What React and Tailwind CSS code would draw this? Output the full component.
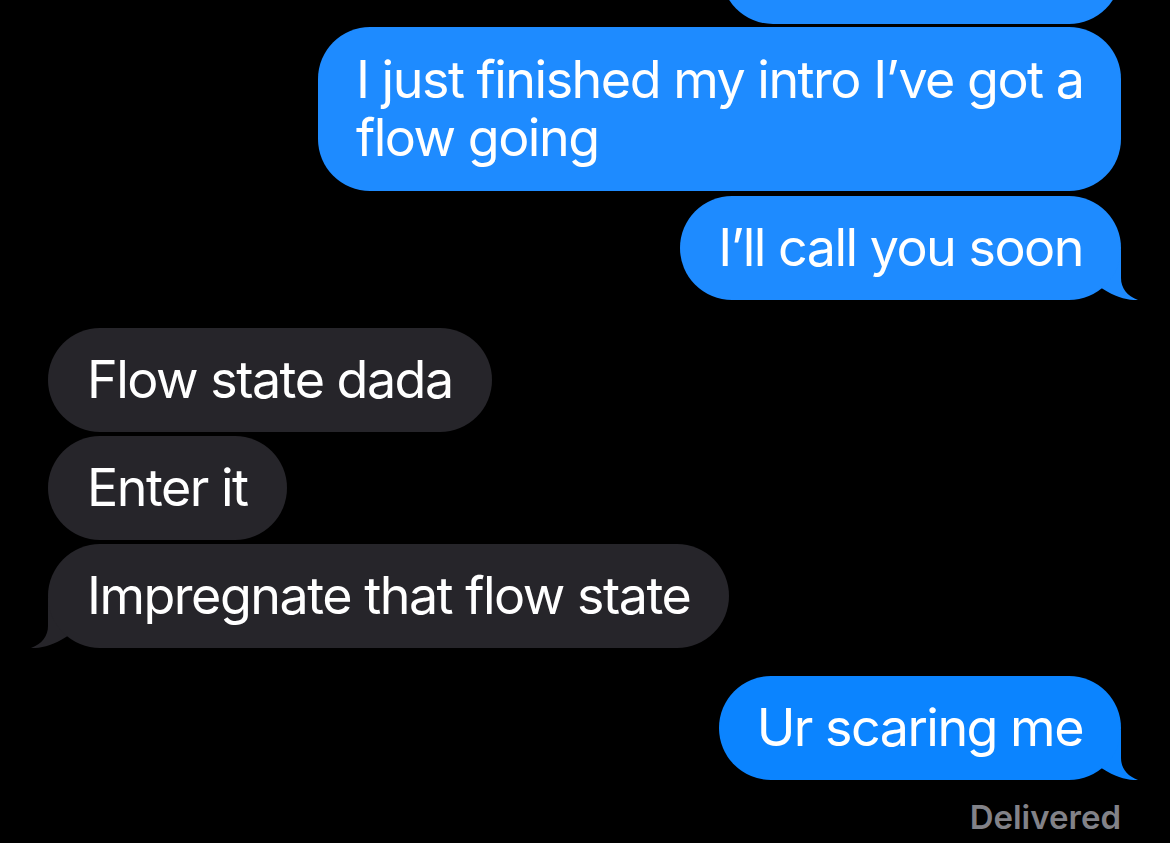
import React from "react";

function SentTail({ color }) {
  return (
    <svg
      className="absolute bottom-0 right-[-17px] pointer-events-none"
      width="40"
      height="50"
      viewBox="0 0 40 50"
    >
      <path
        d="M0 0 L23 0 L23 28 C23 38 29 46 40 50 C30 50.5 18 47.5 5 39 L0 36 Z"
        fill={color}
      />
    </svg>
  );
}

function RecvTail({ color }) {
  return (
    <svg
      className="absolute bottom-0 left-[-17px] pointer-events-none"
      width="40"
      height="50"
      viewBox="0 0 40 50"
    >
      <path
        d="M40 0 L17 0 L17 28 C17 38 11 46 0 50 C10 50.5 22 47.5 35 39 L40 36 Z"
        fill={color}
      />
    </svg>
  );
}

function Sent({ children, color = "#1e8bff", tail = false, className = "", pad = "py-[23px]" }) {
  return (
    <div className={`relative self-end ${className}`}>
      <div
        className={`relative z-10 whitespace-nowrap rounded-[52px] px-[38px] ${pad} text-white text-[52px] leading-[58px] tracking-[-1.5px]`}
        style={{ backgroundColor: color }}
      >
        {children}
      </div>
      {tail && <SentTail color={color} />}
    </div>
  );
}

function Recv({ children, tail = false, className = "" }) {
  return (
    <div className={`relative self-start ${className}`}>
      <div className="relative z-10 whitespace-nowrap rounded-[52px] bg-[#26252a] px-[39px] py-[23px] text-white text-[52px] leading-[58px] tracking-[-1.5px]">
        {children}
      </div>
      {tail && <RecvTail color="#26252a" />}
    </div>
  );
}

export default function App() {
  return (
    <div
      className="w-[1170px] h-[843px] overflow-hidden bg-black"
      style={{ fontFamily: "Inter, 'Noto Sans', sans-serif" }}
    >
      <div className="flex flex-col pl-[48px] pr-[49px]">
        <div className="self-end mt-[-80px] h-[104px] w-[400px] rounded-[52px] bg-[#1e8bff]" />
        <Sent className="mt-[3px] w-[803px]" pad="py-[24px]">
          I just finished my intro I’ve got a
          <br />
          flow going
        </Sent>
        <Sent className="mt-[5px]" tail>
          I’ll call you soon
        </Sent>
        <Recv className="mt-[28px]">Flow state dada</Recv>
        <Recv className="mt-[4px]">Enter it</Recv>
        <Recv className="mt-[4px]" tail>
          Impregnate that flow state
        </Recv>
        <Sent className="mt-[28px]" color="#0b84ff" tail>
          Ur scaring me
        </Sent>
        <div className="self-end mt-[17px] text-[33px] leading-[40px] font-semibold text-[#828288]">
          Delivered
        </div>
      </div>
    </div>
  );
}
